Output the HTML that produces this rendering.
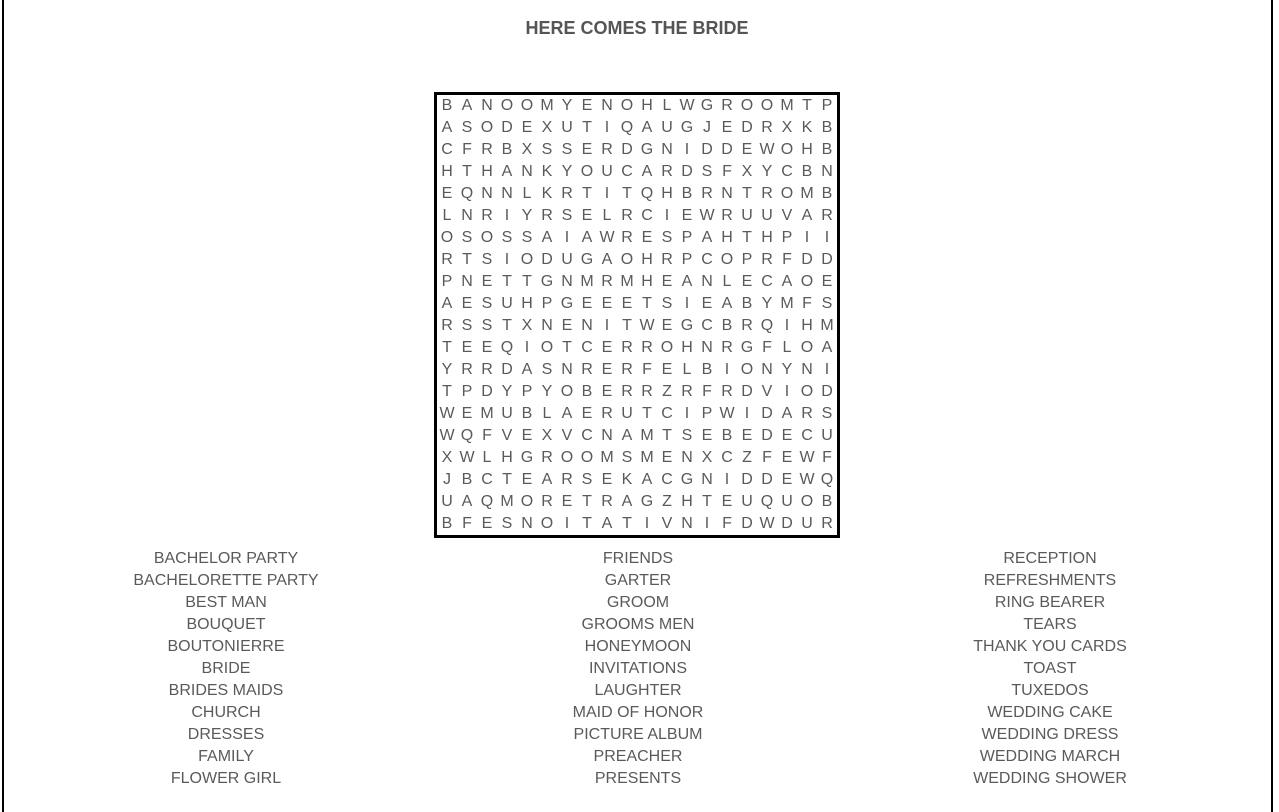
<!DOCTYPE html>
<html><head><meta charset="utf-8"><style>
body{margin:0;width:1279px;height:812px;background:#fff;font-family:"Liberation Sans",sans-serif;color:#5a5a5a;position:relative;overflow:hidden}
.frame{position:absolute;left:2px;top:0;width:1271px;height:812px;border-left:2px solid #000;border-right:2px solid #000;box-sizing:border-box}
h1{position:absolute;top:18px;left:0;width:1274px;text-align:center;font-size:18px;font-weight:bold;margin:0;color:#555}
.grid{position:absolute;left:434px;top:92px;width:400px;border:3px solid #000;padding:0}
.row{height:22px;display:flex}
.row span{width:20px;text-align:center;font-size:16px;line-height:22px}
.col{position:absolute;top:548px;width:300px;text-align:center;font-size:16px;line-height:22px}
</style></head><body>
<div class="frame"></div>
<h1>HERE COMES THE BRIDE</h1>
<div class="col" style="left:76px">BACHELOR PARTY<br>BACHELORETTE PARTY<br>BEST MAN<br>BOUQUET<br>BOUTONIERRE<br>BRIDE<br>BRIDES MAIDS<br>CHURCH<br>DRESSES<br>FAMILY<br>FLOWER GIRL</div>
<div class="col" style="left:488px">FRIENDS<br>GARTER<br>GROOM<br>GROOMS MEN<br>HONEYMOON<br>INVITATIONS<br>LAUGHTER<br>MAID OF HONOR<br>PICTURE ALBUM<br>PREACHER<br>PRESENTS</div>
<div class="col" style="left:900px">RECEPTION<br>REFRESHMENTS<br>RING BEARER<br>TEARS<br>THANK YOU CARDS<br>TOAST<br>TUXEDOS<br>WEDDING CAKE<br>WEDDING DRESS<br>WEDDING MARCH<br>WEDDING SHOWER</div>
<div class="grid">
<div class="row"><span>B</span><span>A</span><span>N</span><span>O</span><span>O</span><span>M</span><span>Y</span><span>E</span><span>N</span><span>O</span><span>H</span><span>L</span><span>W</span><span>G</span><span>R</span><span>O</span><span>O</span><span>M</span><span>T</span><span>P</span></div>
<div class="row"><span>A</span><span>S</span><span>O</span><span>D</span><span>E</span><span>X</span><span>U</span><span>T</span><span>I</span><span>Q</span><span>A</span><span>U</span><span>G</span><span>J</span><span>E</span><span>D</span><span>R</span><span>X</span><span>K</span><span>B</span></div>
<div class="row"><span>C</span><span>F</span><span>R</span><span>B</span><span>X</span><span>S</span><span>S</span><span>E</span><span>R</span><span>D</span><span>G</span><span>N</span><span>I</span><span>D</span><span>D</span><span>E</span><span>W</span><span>O</span><span>H</span><span>B</span></div>
<div class="row"><span>H</span><span>T</span><span>H</span><span>A</span><span>N</span><span>K</span><span>Y</span><span>O</span><span>U</span><span>C</span><span>A</span><span>R</span><span>D</span><span>S</span><span>F</span><span>X</span><span>Y</span><span>C</span><span>B</span><span>N</span></div>
<div class="row"><span>E</span><span>Q</span><span>N</span><span>N</span><span>L</span><span>K</span><span>R</span><span>T</span><span>I</span><span>T</span><span>Q</span><span>H</span><span>B</span><span>R</span><span>N</span><span>T</span><span>R</span><span>O</span><span>M</span><span>B</span></div>
<div class="row"><span>L</span><span>N</span><span>R</span><span>I</span><span>Y</span><span>R</span><span>S</span><span>E</span><span>L</span><span>R</span><span>C</span><span>I</span><span>E</span><span>W</span><span>R</span><span>U</span><span>U</span><span>V</span><span>A</span><span>R</span></div>
<div class="row"><span>O</span><span>S</span><span>O</span><span>S</span><span>S</span><span>A</span><span>I</span><span>A</span><span>W</span><span>R</span><span>E</span><span>S</span><span>P</span><span>A</span><span>H</span><span>T</span><span>H</span><span>P</span><span>I</span><span>I</span></div>
<div class="row"><span>R</span><span>T</span><span>S</span><span>I</span><span>O</span><span>D</span><span>U</span><span>G</span><span>A</span><span>O</span><span>H</span><span>R</span><span>P</span><span>C</span><span>O</span><span>P</span><span>R</span><span>F</span><span>D</span><span>D</span></div>
<div class="row"><span>P</span><span>N</span><span>E</span><span>T</span><span>T</span><span>G</span><span>N</span><span>M</span><span>R</span><span>M</span><span>H</span><span>E</span><span>A</span><span>N</span><span>L</span><span>E</span><span>C</span><span>A</span><span>O</span><span>E</span></div>
<div class="row"><span>A</span><span>E</span><span>S</span><span>U</span><span>H</span><span>P</span><span>G</span><span>E</span><span>E</span><span>E</span><span>T</span><span>S</span><span>I</span><span>E</span><span>A</span><span>B</span><span>Y</span><span>M</span><span>F</span><span>S</span></div>
<div class="row"><span>R</span><span>S</span><span>S</span><span>T</span><span>X</span><span>N</span><span>E</span><span>N</span><span>I</span><span>T</span><span>W</span><span>E</span><span>G</span><span>C</span><span>B</span><span>R</span><span>Q</span><span>I</span><span>H</span><span>M</span></div>
<div class="row"><span>T</span><span>E</span><span>E</span><span>Q</span><span>I</span><span>O</span><span>T</span><span>C</span><span>E</span><span>R</span><span>R</span><span>O</span><span>H</span><span>N</span><span>R</span><span>G</span><span>F</span><span>L</span><span>O</span><span>A</span></div>
<div class="row"><span>Y</span><span>R</span><span>R</span><span>D</span><span>A</span><span>S</span><span>N</span><span>R</span><span>E</span><span>R</span><span>F</span><span>E</span><span>L</span><span>B</span><span>I</span><span>O</span><span>N</span><span>Y</span><span>N</span><span>I</span></div>
<div class="row"><span>T</span><span>P</span><span>D</span><span>Y</span><span>P</span><span>Y</span><span>O</span><span>B</span><span>E</span><span>R</span><span>R</span><span>Z</span><span>R</span><span>F</span><span>R</span><span>D</span><span>V</span><span>I</span><span>O</span><span>D</span></div>
<div class="row"><span>W</span><span>E</span><span>M</span><span>U</span><span>B</span><span>L</span><span>A</span><span>E</span><span>R</span><span>U</span><span>T</span><span>C</span><span>I</span><span>P</span><span>W</span><span>I</span><span>D</span><span>A</span><span>R</span><span>S</span></div>
<div class="row"><span>W</span><span>Q</span><span>F</span><span>V</span><span>E</span><span>X</span><span>V</span><span>C</span><span>N</span><span>A</span><span>M</span><span>T</span><span>S</span><span>E</span><span>B</span><span>E</span><span>D</span><span>E</span><span>C</span><span>U</span></div>
<div class="row"><span>X</span><span>W</span><span>L</span><span>H</span><span>G</span><span>R</span><span>O</span><span>O</span><span>M</span><span>S</span><span>M</span><span>E</span><span>N</span><span>X</span><span>C</span><span>Z</span><span>F</span><span>E</span><span>W</span><span>F</span></div>
<div class="row"><span>J</span><span>B</span><span>C</span><span>T</span><span>E</span><span>A</span><span>R</span><span>S</span><span>E</span><span>K</span><span>A</span><span>C</span><span>G</span><span>N</span><span>I</span><span>D</span><span>D</span><span>E</span><span>W</span><span>Q</span></div>
<div class="row"><span>U</span><span>A</span><span>Q</span><span>M</span><span>O</span><span>R</span><span>E</span><span>T</span><span>R</span><span>A</span><span>G</span><span>Z</span><span>H</span><span>T</span><span>E</span><span>U</span><span>Q</span><span>U</span><span>O</span><span>B</span></div>
<div class="row"><span>B</span><span>F</span><span>E</span><span>S</span><span>N</span><span>O</span><span>I</span><span>T</span><span>A</span><span>T</span><span>I</span><span>V</span><span>N</span><span>I</span><span>F</span><span>D</span><span>W</span><span>D</span><span>U</span><span>R</span></div>
</div>
</body></html>
